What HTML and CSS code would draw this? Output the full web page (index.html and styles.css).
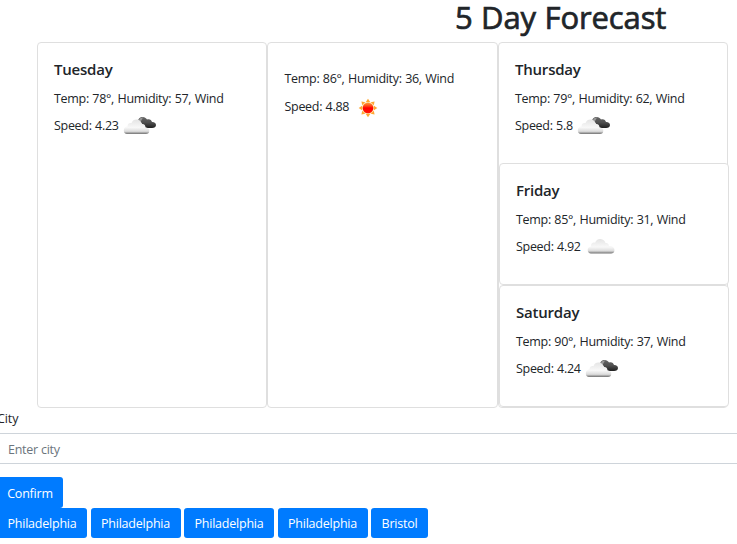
FILE: index.html
```html
<!DOCTYPE html>
<html lang="en">
<head>
<meta charset="utf-8">
<title>Weather Dashboard</title>
<link rel="stylesheet" href="styles.css">
</head>
<body>
<svg class="defs" width="0" height="0">
  <defs>
    <linearGradient id="white" x1="0" y1="0" x2="0" y2="1"><stop offset="0" stop-color="#e4e4e4"/><stop offset=".55" stop-color="#f8f8f8"/><stop offset=".82" stop-color="#dcdcdc"/><stop offset="1" stop-color="#707070"/></linearGradient>
    <linearGradient id="dark" x1="0" y1="0" x2="0" y2="1"><stop offset="0" stop-color="#666"/><stop offset=".5" stop-color="#505050"/><stop offset="1" stop-color="#202020"/></linearGradient>
    <linearGradient id="red" x1="0" y1="0" x2="0" y2="1"><stop offset="0" stop-color="#ff9a32"/><stop offset=".35" stop-color="#ff3a12"/><stop offset=".5" stop-color="#f00"/><stop offset="1" stop-color="#ff1a08"/></linearGradient>
    <symbol id="clouds" viewBox="0 0 34 20">
      <path d="M15 6C15 2.500 17 1 19.500 1C22 1 23.500 2.500 24 3.500C26.500 2.500 28.500 4 29 6C31.500 5.800 33 7.300 33 9C33 11 31.500 12 29 12H24C22 12 21 10.500 20 9C19 7 17 6 15 6Z" fill="url(#dark)"/>
      <path d="M15.500 4.500Q17 1.200 20 1.500L17.500 6Z" fill="#999"/>
      <path d="M4 18C2 18 .8 16.500 .8 14.500C.8 12 2.500 10.600 4.500 10.500C4.500 7.500 6.500 6.500 8.500 7C9.500 4 12 3 14.500 3.500C17 4 18.500 6 18.800 8C21.500 7.800 22.500 9.500 22.500 11.500C25 11.500 26.500 13 26.300 15C26.200 17 25 18 23 18Z" fill="url(#white)"/>
    </symbol>
    <symbol id="cloud" viewBox="0 0 28 17">
      <path d="M4 15.500C2 15.500 .7 14 .7 12C.7 10 2 8.800 4 8.500C3.500 5.500 6 4 8 4.800C9 2 11 .8 13.500 1C16 1.200 18 3 18.500 5C20.500 4.500 22 6 22 8C25 7.500 27.500 9.500 27.500 12C27.500 14.500 26 15.500 24 15.500Z" fill="url(#white)"/>
    </symbol>
    <symbol id="sun" viewBox="-10 -10 20 20">
      <g fill="#ffa733"><path id="ray" d="M-2.200-6L0-9.300L2.200-6Z"/><use href="#ray" transform="rotate(45)"/><use href="#ray" transform="rotate(90)"/><use href="#ray" transform="rotate(135)"/><use href="#ray" transform="rotate(180)"/><use href="#ray" transform="rotate(225)"/><use href="#ray" transform="rotate(270)"/><use href="#ray" transform="rotate(315)"/></g>
      <circle r="6" fill="#ffd390"/><circle r="5.300" fill="url(#red)"/>
    </symbol>
  </defs>
</svg>
<h1>5 Day Forecast</h1>
<main class="forecast">
  <section class="card">
    <div class="card-body">
      <h2>Tuesday</h2>
      <p>Temp: 78°, Humidity: 57, Wind</p>
      <p class="speed"><span>Speed: 4.23</span><svg class="clouds"><use href="#clouds"/></svg></p>
    </div>
  </section>
  <section class="card">
    <div class="card-body untitled">
      <p>Temp: 86°, Humidity: 36, Wind</p>
      <p class="speed"><span>Speed: 4.88</span><svg class="sun"><use href="#sun"/></svg></p>
    </div>
  </section>
  <section class="card">
    <div class="card-body">
      <h2>Thursday</h2>
      <p>Temp: 79°, Humidity: 62, Wind</p>
      <p class="speed"><span>Speed: 5.8</span><svg class="clouds"><use href="#clouds"/></svg></p>
    </div>
    <section class="card nested">
      <div class="card-body">
        <h2>Friday</h2>
        <p>Temp: 85°, Humidity: 31, Wind</p>
        <p class="speed"><span>Speed: 4.92</span><svg class="cloud"><use href="#cloud"/></svg></p>
      </div>
    </section>
    <section class="card nested">
      <div class="card-body">
        <h2>Saturday</h2>
        <p>Temp: 90°, Humidity: 37, Wind</p>
        <p class="speed"><span>Speed: 4.24</span><svg class="clouds"><use href="#clouds"/></svg></p>
      </div>
    </section>
  </section>
</main>
<form class="search">
  <label for="city">City</label>
  <input id="city" type="text" placeholder="Enter city">
  <button type="button" class="confirm">Confirm</button>
</form>
<div class="history">
  <button>Philadelphia</button><button>Philadelphia</button><button>Philadelphia</button><button>Philadelphia</button><button class="bristol">Bristol</button>
</div>
</body>
</html>
```
FILE: styles.css
```css
* { box-sizing: border-box; }
body {
  margin: 0;
  overflow: hidden;
  background: #fff;
  color: #212529;
  font: 12.5px/20px "Open Sans", "Noto Sans", sans-serif;
  letter-spacing: -0.3px;
  word-spacing: 0.5px;
}
.defs { position: absolute; }
h1 {
  margin: 0 0 0 455px;
  height: 42px;
  font-size: 31px;
  font-weight: 500;
  line-height: 34px;
  letter-spacing: -0.1px;
  white-space: nowrap;
  -webkit-text-stroke: 0.7px #212529;
}
.forecast {
  display: grid;
  grid-template-columns: 230px 231px 230px;
  margin-left: 37px;
  height: 366px;
}
.card {
  border: 1px solid #dfdfdf;
  border-radius: 4px;
  background: #fff;
}
.card-body { height: 120px; padding: 16px 16px 0; }
.nested { width: 230px; height: 122px; }
h2 {
  margin: 0 0 10px;
  font-size: 15px;
  font-weight: 600;
  line-height: 20px;
  letter-spacing: -0.22px;
}
p { margin: 0; height: 27px; white-space: nowrap; }
.untitled { padding: 26px 16px 0 16.5px; }
.untitled p { height: 28px; }
.speed { display: flex; align-items: flex-start; }
.clouds { width: 34px; height: 20px; margin-left: 4.3px; }
.cloud { width: 28px; height: 17px; margin: 1px 0 0 6.3px; }
.sun { width: 20px; height: 20px; margin: 0.5px 0 0 9.3px; }
.search { display: flex; flex-direction: column; align-items: flex-start; }
label { height: 25px; margin-left: -3px; line-height: 22px; letter-spacing: -0.1px; }
input {
  width: 750px;
  height: 31px;
  margin: 0 0 13px -5px;
  padding: 2px 12px 0;
  border: 1px solid #ced4da;
  border-radius: 4px;
  font: inherit;
  letter-spacing: -0.25px;
}
input::placeholder { color: #6c757d; opacity: 1; }
button {
  flex: none;
  width: 90px;
  height: 30px;
  padding: 1px 0 0;
  border: 0;
  border-radius: 3px;
  background: #007bff;
  color: #fff;
  font: inherit;
  letter-spacing: -0.22px;
}
.confirm { width: 66px; height: 31px; margin-left: -3px; padding-top: 2px; }
.history { display: flex; gap: 3.5px; margin-left: -3px; }
.bristol { width: 57px; }
```
